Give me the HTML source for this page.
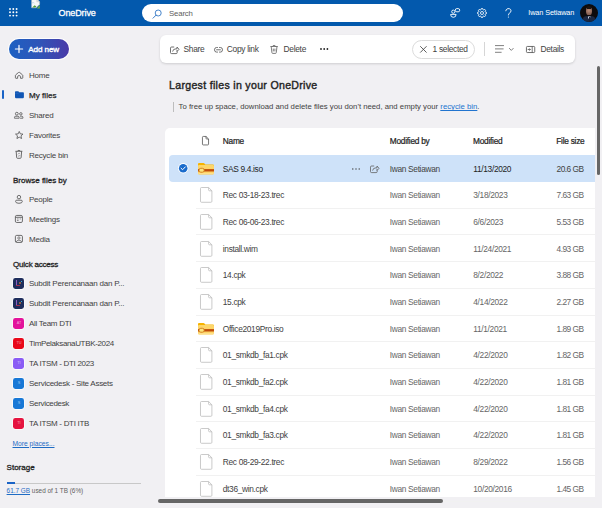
<!DOCTYPE html>
<html><head><meta charset="utf-8">
<style>
*{margin:0;padding:0;box-sizing:border-box}
html,body{width:602px;height:508px;overflow:hidden}
body{font-family:"Liberation Sans",sans-serif;background:#f1f0f3;position:relative;color:#242424}
.a{position:absolute}
.ic{position:absolute;overflow:visible}
.t{position:absolute;white-space:nowrap;line-height:10px;height:10px}
.nav{font-size:8px;color:#424242}
.sec{font-size:8px;color:#242424;-webkit-text-stroke:0.3px #242424}
.cmd{font-size:8.4px;color:#424242;letter-spacing:-0.3px}
.hc{font-size:8.3px;letter-spacing:-0.25px;color:#242424;-webkit-text-stroke:0.22px #242424}
.c{font-size:8.35px;color:#666;letter-spacing:-0.33px}
.cn{font-size:8.35px;color:#424242;letter-spacing:-0.33px}
</style></head><body>

<div class="a" style="left:0;top:0;width:602px;height:25.5px;background:#0359ad"></div>
<svg class="ic" style="left:9px;top:8.2px;width:9px;height:9px" viewBox="0 0 9 9"><circle cx="1.00" cy="1.00" r="0.95" fill="#fff"/><circle cx="1.00" cy="4.30" r="0.95" fill="#fff"/><circle cx="1.00" cy="7.60" r="0.95" fill="#fff"/><circle cx="4.30" cy="1.00" r="0.95" fill="#fff"/><circle cx="4.30" cy="4.30" r="0.95" fill="#fff"/><circle cx="4.30" cy="7.60" r="0.95" fill="#fff"/><circle cx="7.60" cy="1.00" r="0.95" fill="#fff"/><circle cx="7.60" cy="4.30" r="0.95" fill="#fff"/><circle cx="7.60" cy="7.60" r="0.95" fill="#fff"/></svg>
<svg class="ic" style="left:31px;top:0px;width:9.5px;height:8.5px" viewBox="0 0 9.5 8.5"><path d="M0.6 -1 H5.8 L8.6 1.8 V4.2 L5.2 7.8 H0.6 Z" fill="#f7f7f7" stroke="#bdbdbd" stroke-width="0.5"/><path d="M5.8 -1 V1.8 H8.6" fill="#e0e0e0" stroke="#bdbdbd" stroke-width="0.4"/><path d="M1.2 7.6 L3.6 5.2 L5.4 6.6 L4.4 7.6 Z" fill="#4f9a3a"/><path d="M5.6 8.4 L8.8 5 V8.4 Z" fill="#6aab45"/><path d="M1 3 Q2.4 2 3.4 3.2" fill="none" stroke="#8fb7e0" stroke-width="0.5"/></svg>
<div class="t " style="left:58.5px;top:7.5px;font-size:9px;color:#fff;-webkit-text-stroke:0.3px #fff;letter-spacing:-0.1px">OneDrive</div>
<div class="a" style="left:142.3px;top:3.7px;width:260.5px;height:18px;background:#fff;border-radius:9px"></div>
<svg class="ic" style="left:152px;top:8.5px;width:10px;height:10px" viewBox="0 0 10 10"><circle cx="6.2" cy="4" r="3" fill="none" stroke="#3f7fc8" stroke-width="0.95"/><path d="M4.1 6.1 L1 9.2" stroke="#3f7fc8" stroke-width="1" stroke-linecap="round"/></svg>
<div class="t " style="left:169px;top:8.7px;font-size:7.8px;letter-spacing:-0.15px;color:#605e5c">Search</div>
<svg class="ic" style="left:450px;top:8px;width:10px;height:10px" viewBox="0 0 10 10"><circle cx="3.3" cy="3.7" r="1.6" fill="none" stroke="#fff" stroke-width="0.9"/><path d="M0.6 6.4 H6.1 Q6.1 9.3 3.35 9.3 Q0.6 9.3 0.6 6.4 Z" fill="none" stroke="#fff" stroke-width="0.9" stroke-linejoin="round"/><rect x="5.3" y="0.6" width="4.4" height="3.2" rx="1.5" fill="none" stroke="#fff" stroke-width="0.9"/></svg>
<svg class="ic" style="left:477px;top:8px;width:10px;height:10px" viewBox="0 0 10 10"><circle cx="5" cy="5" r="1.5" fill="none" stroke="#fff" stroke-width="0.85"/><path d="M8.44 4.14 L9.51 4.37 L9.51 5.63 L8.44 5.86 L8.04 6.83 L8.63 7.74 L7.74 8.63 L6.83 8.04 L5.86 8.44 L5.63 9.51 L4.37 9.51 L4.14 8.44 L3.17 8.04 L2.26 8.63 L1.37 7.74 L1.96 6.83 L1.56 5.86 L0.49 5.63 L0.49 4.37 L1.56 4.14 L1.96 3.17 L1.37 2.26 L2.26 1.37 L3.17 1.96 L4.14 1.56 L4.37 0.49 L5.63 0.49 L5.86 1.56 L6.83 1.96 L7.74 1.37 L8.63 2.26 L8.04 3.17 Z" fill="none" stroke="#fff" stroke-width="0.85" stroke-linejoin="round"/></svg>
<svg class="ic" style="left:505px;top:8px;width:7px;height:10px" viewBox="0 0 7 10"><path d="M0.8 2.8 C0.8 -0.2 6 -0.2 6 2.8 C6 4.8 3.4 5 3.4 7" fill="none" stroke="#fff" stroke-width="0.9" stroke-linecap="round"/><circle cx="3.4" cy="9" r="0.6" fill="#fff"/></svg>
<div class="t " style="left:528.3px;top:8.2px;font-size:7.3px;letter-spacing:-0.12px;color:#fff">Iwan Setiawan</div>
<div class="a" style="left:580px;top:3.8px;width:18px;height:18px;border-radius:50%;background:#0d0b0c;overflow:hidden"><div class="a" style="left:6.3px;top:3.5px;width:5.6px;height:8px;border-radius:45%;background:radial-gradient(circle at 50% 45%,#b98c78,#6e4d42)"></div><div class="a" style="left:7px;top:2.6px;width:4.4px;height:2.5px;border-radius:50% 50% 0 0;background:#1a1412"></div><div class="a" style="left:3px;top:12.5px;width:12px;height:7px;border-radius:40% 40% 0 0;background:#1b2842"></div><div class="a" style="left:7.6px;top:12.6px;width:3px;height:3px;background:#d8dde6;clip-path:polygon(0 0,100% 0,50% 100%)"></div><div class="a" style="left:8.6px;top:13.6px;width:1px;height:5px;background:#1a2238"></div></div>
<div class="a" style="left:0;top:25.5px;width:155px;height:482.5px;background:#f1f0f3"></div>
<div class="a" style="left:9px;top:39px;width:60px;height:20px;border-radius:10px;background:linear-gradient(90deg,#1c60c2,#2f55b8 50%,#4a3aa8);box-shadow:0 0 0 1px rgba(255,255,255,.85)"></div>
<svg class="ic" style="left:14.8px;top:45.3px;width:8px;height:8px" viewBox="0 0 8 8"><path d="M4 0.4 V7.6 M0.4 4 H7.6" stroke="#fff" stroke-width="1.2" stroke-linecap="round"/></svg>
<div class="t " style="left:28.3px;top:44.9px;font-size:8.1px;letter-spacing:-0.1px;color:#fff;-webkit-text-stroke:0.35px #fff">Add new</div>
<div class="t nav" style="left:29px;top:70.8px;letter-spacing:-0.22px">Home</div>
<svg class="ic" style="left:14.8px;top:72px;width:8.2px;height:6.7px" viewBox="0 0 17 14"><path d="M7.2 1.1 Q8.5 0 9.8 1.1 L15.6 6 Q16.2 6.5 16.2 7.3 V12 Q16.2 13.2 15 13.2 H11.6 V9.6 Q11.6 7.6 8.5 7.6 Q5.4 7.6 5.4 9.6 V13.2 H2 Q0.8 13.2 0.8 12 V7.3 Q0.8 6.5 1.4 6 Z" fill="none" stroke="#555" stroke-width="1.75" stroke-linejoin="round"/></svg>
<div class="t nav" style="left:29px;top:90.8px;color:#242424;-webkit-text-stroke:0.25px #242424;letter-spacing:0.05px">My files</div>
<svg class="ic" style="left:14.5px;top:91px;width:8.9px;height:7.4px" viewBox="0 0 18 14"><path d="M0 1.6 Q0 0 1.6 0 H6 Q6.8 0 7.3 0.5 L8.6 1.8 H16.4 Q18 1.8 18 3.4 V12.4 Q18 14 16.4 14 H1.6 Q0 14 0 12.4 Z" fill="#1156b4"/><path d="M0 4 H7 L8.6 2.6" fill="none" stroke="#4d86cf" stroke-width="0.7"/></svg>
<div class="t nav" style="left:29px;top:110.8px;letter-spacing:-0.22px">Shared</div>
<svg class="ic" style="left:14.4px;top:111.5px;width:9.4px;height:6.6px" viewBox="0 0 20 14"><circle cx="6" cy="3.6" r="3" fill="none" stroke="#555" stroke-width="1.75"/><path d="M1 13.2 V11.6 Q1 9 3.6 9 H8.4 Q11 9 11 11.6 V13.2 Z" fill="none" stroke="#555" stroke-width="1.75" stroke-linejoin="round"/><circle cx="14.6" cy="3.9" r="2.6" fill="none" stroke="#555" stroke-width="1.75"/><path d="M13 9 H16.4 Q19 9 19 11.6 V13.2 H13" fill="none" stroke="#555" stroke-width="1.75" stroke-linejoin="round"/></svg>
<div class="t nav" style="left:29px;top:130.8px;letter-spacing:-0.22px">Favorites</div>
<svg class="ic" style="left:14.7px;top:130.8px;width:8.5px;height:8.1px" viewBox="0 0 18 17"><path d="M9 0.9 L11.3 6 L16.9 6.5 L12.7 10.2 L13.9 15.9 L9 13 L4.1 15.9 L5.3 10.2 L1.1 6.5 L6.7 6 Z" fill="none" stroke="#555" stroke-width="1.75" stroke-linejoin="round"/></svg>
<div class="t nav" style="left:29px;top:150.8px;letter-spacing:-0.22px">Recycle bin</div>
<svg class="ic" style="left:15px;top:150.4px;width:7.8px;height:8.8px" viewBox="0 0 16 18"><path d="M1 2.6 H15 M2.4 2.6 L3.4 15.4 Q3.6 17 5.2 17 H10.8 Q12.4 17 12.6 15.4 L13.6 2.6 M5.4 2.6 Q5.4 0.8 8 0.8 Q10.6 0.8 10.6 2.6" fill="none" stroke="#555" stroke-width="1.75" stroke-linejoin="round"/><path d="M5.8 9 Q6.8 6.6 9.2 7 L10.2 7.8 M10.4 10.6 Q9.6 12.8 7 12.4 L6 11.6" fill="none" stroke="#555" stroke-width="1"/></svg>
<div class="a" style="left:2px;top:90.4px;width:1.8px;height:8.8px;border-radius:1px;background:#1a63c6"></div>
<div class="t sec" style="left:13px;top:176.1px;">Browse files by</div>
<div class="t nav" style="left:29px;top:194.8px;letter-spacing:-0.22px">People</div>
<svg class="ic" style="left:15.1px;top:194.9px;width:7.9px;height:8.7px" viewBox="0 0 16 18"><circle cx="8" cy="4.4" r="3.6" fill="none" stroke="#555" stroke-width="1.75"/><path d="M1 13.2 Q1 10.8 3.4 10.8 H12.6 Q15 10.8 15 13.2 Q15 17.2 8 17.2 Q1 17.2 1 13.2 Z" fill="none" stroke="#555" stroke-width="1.75"/></svg>
<div class="t nav" style="left:29px;top:214.8px;letter-spacing:-0.22px">Meetings</div>
<svg class="ic" style="left:15.1px;top:215.3px;width:7.8px;height:7.9px" viewBox="0 0 16 16"><rect x="0.8" y="0.8" width="14.4" height="14.4" rx="2.6" fill="none" stroke="#555" stroke-width="1.75"/><path d="M0.8 4.6 H15.2" stroke="#555" stroke-width="1.75"/><path d="M4 8 H7.4 M4 11.2 H7.4 M9.6 8 H12" stroke="#555" stroke-width="1.3"/></svg>
<div class="t nav" style="left:29px;top:234.8px;letter-spacing:-0.22px">Media</div>
<svg class="ic" style="left:15.1px;top:235.3px;width:7.8px;height:7.8px" viewBox="0 0 16 16"><rect x="0.8" y="0.8" width="14.4" height="14.4" rx="2.6" fill="none" stroke="#555" stroke-width="1.75"/><circle cx="8" cy="6.2" r="2.4" fill="none" stroke="#555" stroke-width="1.4"/><path d="M2.2 14.6 Q3.6 10.6 8 10.6 Q12.4 10.6 13.8 14.6" fill="none" stroke="#555" stroke-width="1.4"/></svg>
<div class="t sec" style="left:13px;top:260.2px;letter-spacing:-0.2px">Quick access</div>
<div class="t nav" style="left:29px;top:279.4px;letter-spacing:-0.22px">Subdit Perencanaan dan P...</div>
<div class="a" style="left:13.4px;top:277.9px;width:11.1px;height:11.1px;border-radius:2.4px;background:#1f2d5c;box-shadow:0 0 0 0.7px rgba(255,255,255,.9)"><div class="a" style="left:2.2px;top:2.2px;width:0.9px;height:5.5px;background:#8a5fc0"></div><div class="a" style="left:5.2px;top:4.2px;width:2.2px;height:2.2px;border-radius:50%;background:#b07040"></div><div class="a" style="left:7.6px;top:3px;width:0.9px;height:0.9px;background:#3ab0d8"></div><div class="a" style="left:2.2px;top:7.6px;width:4px;height:0.8px;background:#a03050"></div></div>
<div class="t nav" style="left:29px;top:299.4px;letter-spacing:-0.22px">Subdit Perencanaan dan P...</div>
<div class="a" style="left:13.4px;top:297.9px;width:11.1px;height:11.1px;border-radius:2.4px;background:#1f2d5c;box-shadow:0 0 0 0.7px rgba(255,255,255,.9)"><div class="a" style="left:2.2px;top:2.2px;width:0.9px;height:5.5px;background:#8a5fc0"></div><div class="a" style="left:5.2px;top:4.2px;width:2.2px;height:2.2px;border-radius:50%;background:#b07040"></div><div class="a" style="left:7.6px;top:3px;width:0.9px;height:0.9px;background:#3ab0d8"></div><div class="a" style="left:2.2px;top:7.6px;width:4px;height:0.8px;background:#a03050"></div></div>
<div class="t nav" style="left:29px;top:319.4px;letter-spacing:-0.29px">All Team DTI</div>
<div class="a" style="left:13.4px;top:317.9px;width:11.1px;height:11.1px;border-radius:2.4px;background:#e3139b;box-shadow:0 0 0 0.7px rgba(255,255,255,.9)"><div class="a" style="left:0;top:3px;width:11.1px;text-align:center;font-size:3.8px;line-height:5px;color:rgba(255,255,255,.6)">AT</div></div>
<div class="t nav" style="left:29px;top:339.4px;letter-spacing:-0.35px">TimPelaksanaUTBK-2024</div>
<div class="a" style="left:13.4px;top:337.9px;width:11.1px;height:11.1px;border-radius:2.4px;background:#e9081a;box-shadow:0 0 0 0.7px rgba(255,255,255,.9)"><div class="a" style="left:0;top:3px;width:11.1px;text-align:center;font-size:3.8px;line-height:5px;color:rgba(255,255,255,.6)">TU</div></div>
<div class="t nav" style="left:29px;top:359.4px;letter-spacing:-0.31px">TA ITSM - DTI 2023</div>
<div class="a" style="left:13.4px;top:357.9px;width:11.1px;height:11.1px;border-radius:2.4px;background:#8a5cf5;box-shadow:0 0 0 0.7px rgba(255,255,255,.9)"><div class="a" style="left:0;top:3px;width:11.1px;text-align:center;font-size:3.8px;line-height:5px;color:rgba(255,255,255,.6)">TI</div></div>
<div class="t nav" style="left:29px;top:379.4px;letter-spacing:-0.26px">Servicedesk - Site Assets</div>
<div class="a" style="left:13.4px;top:377.9px;width:11.1px;height:11.1px;border-radius:2.4px;background:#1878d6;box-shadow:0 0 0 0.7px rgba(255,255,255,.9)"><div class="a" style="left:0;top:3px;width:11.1px;text-align:center;font-size:3.8px;line-height:5px;color:rgba(255,255,255,.6)">S</div></div>
<div class="t nav" style="left:29px;top:399.4px;letter-spacing:-0.32px">Servicedesk</div>
<div class="a" style="left:13.4px;top:397.9px;width:11.1px;height:11.1px;border-radius:2.4px;background:#1878d6;box-shadow:0 0 0 0.7px rgba(255,255,255,.9)"><div class="a" style="left:0;top:3px;width:11.1px;text-align:center;font-size:3.8px;line-height:5px;color:rgba(255,255,255,.6)">S</div></div>
<div class="t nav" style="left:29px;top:419.4px;letter-spacing:-0.3px">TA ITSM - DTI ITB</div>
<div class="a" style="left:13.4px;top:417.9px;width:11.1px;height:11.1px;border-radius:2.4px;background:#e5133f;box-shadow:0 0 0 0.7px rgba(255,255,255,.9)"><div class="a" style="left:0;top:3px;width:11.1px;text-align:center;font-size:3.8px;line-height:5px;color:rgba(255,255,255,.6)">TI</div></div>
<div class="t " style="left:12.5px;top:438.5px;font-size:6.7px;color:#1f6cc4;text-decoration:underline">More places...</div>
<div class="t " style="left:6.6px;top:463px;font-size:8px;color:#242424;-webkit-text-stroke:0.3px #242424">Storage</div>
<div class="a" style="left:6.6px;top:482.6px;width:134.4px;height:1.1px;background:#c8c8c8"></div>
<div class="a" style="left:6.6px;top:482.2px;width:8px;height:1.8px;background:#1a63c6"></div>
<div class="t " style="left:6.6px;top:486px;font-size:6.4px;color:#616161"><span style="color:#1f6cc4;text-decoration:underline">61.7 GB</span> used of 1 TB (6%)</div>
<div class="a" style="left:160px;top:35.2px;width:415.3px;height:27.8px;background:#fff;border-radius:6px;box-shadow:0 1px 2.5px rgba(0,0,0,.15)"></div>
<svg class="ic" style="left:170px;top:45.6px;width:9px;height:8px" viewBox="0 0 9 8"><path d="M4.2 1 H1.6 Q0.5 1 0.5 2.1 V6.6 Q0.5 7.6 1.6 7.6 H6.2 Q7.2 7.6 7.2 6.6 V5.6" fill="none" stroke="#616161" stroke-width="0.9"/><path d="M2.6 5.6 Q3 2.8 6 2.8 H7 V1 L9 3.3 L7 5.6 V3.9" fill="none" stroke="#616161" stroke-width="0.9" stroke-linejoin="round"/></svg>
<div class="t cmd" style="left:183.5px;top:43.7px;">Share</div>
<svg class="ic" style="left:213.8px;top:46.5px;width:9px;height:5.6px" viewBox="0 0 9 5.6"><path d="M3.5 0.5 H2.6 Q0.5 0.5 0.5 2.8 Q0.5 5.1 2.6 5.1 H3.5 M5.5 0.5 H6.4 Q8.5 0.5 8.5 2.8 Q8.5 5.1 6.4 5.1 H5.5 M2.6 2.8 H6.4" fill="none" stroke="#616161" stroke-width="0.9" stroke-linecap="round"/></svg>
<div class="t cmd" style="left:226.8px;top:43.7px;">Copy link</div>
<svg class="ic" style="left:270.3px;top:45px;width:8.2px;height:8.8px" viewBox="0 0 8.2 8.8"><path d="M0.4 1.5 H7.8 M1.2 1.5 L1.9 7.6 Q2 8.4 2.8 8.4 H5.4 Q6.2 8.4 6.3 7.6 L7 1.5 M2.7 1.5 Q2.7 0.4 4.1 0.4 Q5.5 0.4 5.5 1.5 M3.3 3.6 V6.4 M4.9 3.6 V6.4" fill="none" stroke="#555" stroke-width="0.75" stroke-linejoin="round"/></svg>
<div class="t cmd" style="left:283.6px;top:43.7px;">Delete</div>
<svg class="ic" style="left:319.5px;top:48.2px;width:9px;height:2px" viewBox="0 0 9 2"><circle cx="1" cy="1" r="0.9" fill="#242424"/><circle cx="4.2" cy="1" r="0.9" fill="#242424"/><circle cx="7.4" cy="1" r="0.9" fill="#242424"/></svg>
<div class="a" style="left:412px;top:40px;width:63px;height:18.5px;border:0.8px solid #dcdcdc;border-radius:9.5px;background:#fff"></div>
<svg class="ic" style="left:420.4px;top:45.6px;width:6.8px;height:6.8px" viewBox="0 0 6.8 6.8"><path d="M0.5 0.5 L6.3 6.3 M6.3 0.5 L0.5 6.3" stroke="#424242" stroke-width="0.85" stroke-linecap="round"/></svg>
<div class="t cmd" style="left:432.5px;top:43.7px;">1 selected</div>
<div class="a" style="left:484px;top:42px;width:0.8px;height:14px;background:#d6d6d6"></div>
<svg class="ic" style="left:495px;top:45px;width:10px;height:8px" viewBox="0 0 10 8"><path d="M0.4 0.6 H8.6 M0.4 3.9 H8.2 M0.4 7.3 H6.2" stroke="#555" stroke-width="0.75" stroke-linecap="round"/></svg>
<svg class="ic" style="left:508.5px;top:47.5px;width:5px;height:3px" viewBox="0 0 5 3"><path d="M0.4 0.4 L2.3 2.4 L4.2 0.4" fill="none" stroke="#616161" stroke-width="0.8" stroke-linecap="round"/></svg>
<svg class="ic" style="left:525.8px;top:46.2px;width:9.2px;height:7px" viewBox="0 0 9.2 7"><rect x="0.45" y="0.45" width="8.3" height="6.1" rx="0.9" fill="none" stroke="#555" stroke-width="0.85"/><path d="M6.2 0.45 V6.55 M1.7 3.5 H4.4 M3.3 2.4 L4.4 3.5 L3.3 4.6" fill="none" stroke="#555" stroke-width="0.8"/></svg>
<div class="t cmd" style="left:540.5px;top:43.7px;">Details</div>
<div class="t " style="left:169px;top:79.8px;font-size:10.6px;letter-spacing:0.3px;color:#242424;-webkit-text-stroke:0.4px #242424">Largest files in your OneDrive</div>
<div class="a" style="left:173px;top:102px;width:0.9px;height:10.4px;background:#bdbdbd"></div>
<div class="t " style="left:178.6px;top:102.3px;font-size:7.75px;color:#424242">To free up space, download and delete files you don't need, and empty your <span style="color:#2174cf;text-decoration:underline">recycle bin</span>.</div>
<div class="a" style="left:165px;top:127.8px;width:429.8px;height:369.4px;background:#fff;border-radius:5px 0 0 0"></div>
<svg class="ic" style="left:201.9px;top:136.2px;width:7px;height:9.4px" viewBox="0 0 7 9.4"><path d="M0.45 1.3 Q0.45 0.45 1.3 0.45 H4 L6.55 3 V8.1 Q6.55 8.95 5.7 8.95 H1.3 Q0.45 8.95 0.45 8.1 Z M4 0.45 V2.2 Q4 3 4.8 3 H6.55" fill="none" stroke="#555" stroke-width="0.8" stroke-linejoin="round"/></svg>
<div class="t hc" style="left:222.8px;top:135.9px;">Name</div>
<div class="t hc" style="left:389.8px;top:135.9px;">Modified by</div>
<div class="t hc" style="left:473px;top:135.9px;">Modified</div>
<div class="t hc" style="left:556.3px;top:135.9px;">File size</div>
<div class="a" style="left:169.3px;top:154.9px;width:425.5px;height:26.990000000000002px;background:#cee2f9;border-radius:4px 0 0 4px"></div>
<svg class="ic" style="left:198.3px;top:162.945px;width:16px;height:11.3px" viewBox="0 0 16 11.3"><path d="M0 1 Q0 0 1 0 H5.4 Q6.2 0 6.7 0.7 L7.3 1.6 H15 Q16 1.6 16 2.6 V10.3 Q16 11.3 15 11.3 H1 Q0 11.3 0 10.3 Z" fill="#f6b300"/><path d="M0 2.9 Q0 1.9 1 1.9 H15 Q16 1.9 16 2.9 V10.3 Q16 11.3 15 11.3 H1 Q0 11.3 0 10.3 Z" fill="#fdd66a"/><rect x="5" y="6.1" width="11" height="2.4" fill="#c14c08"/><rect x="0" y="6.1" width="1.5" height="2.4" fill="#c14c08"/><rect x="1" y="5.3" width="5.2" height="3.9" rx="1.8" fill="#fde67c" stroke="#d0761a" stroke-width="0.9"/><rect x="0" y="9.9" width="16" height="1.4" rx="0.7" fill="#fee08a"/></svg>
<div class="t cn" style="left:222.8px;top:163.595px;color:#242424">SAS 9.4.iso</div>
<div class="t c" style="left:389.8px;top:163.595px;color:#424242">Iwan Setiawan</div>
<div class="t c" style="left:473.3px;top:163.595px;color:#242424">11/13/2020</div>
<div class="t c" style="left:556.5px;top:163.595px;color:#424242;letter-spacing:-0.5px">20.6 GB</div>
<div class="a" style="left:196px;top:207.78px;width:398.8px;height:0.8px;background:#f1f1f1"></div>
<svg class="ic" style="left:200.1px;top:187.335px;width:12.4px;height:15.8px" viewBox="0 0 12.4 15.8"><path d="M0.5 1.5 Q0.5 0.5 1.5 0.5 H8.6 L11.9 3.8 V14.3 Q11.9 15.3 10.9 15.3 H1.5 Q0.5 15.3 0.5 14.3 Z M8.6 0.5 V2.8 Q8.6 3.8 9.6 3.8 H11.9" fill="#fff" stroke="#bdbdbd" stroke-width="0.8" stroke-linejoin="round"/></svg>
<div class="t cn" style="left:222.8px;top:190.285px;">Rec 03-18-23.trec</div>
<div class="t c" style="left:389.8px;top:190.285px;">Iwan Setiawan</div>
<div class="t c" style="left:473.3px;top:190.285px;">3/18/2023</div>
<div class="t c" style="left:556.5px;top:190.285px;letter-spacing:-0.5px">7.63 GB</div>
<div class="a" style="left:196px;top:234.47px;width:398.8px;height:0.8px;background:#f1f1f1"></div>
<svg class="ic" style="left:200.1px;top:214.025px;width:12.4px;height:15.8px" viewBox="0 0 12.4 15.8"><path d="M0.5 1.5 Q0.5 0.5 1.5 0.5 H8.6 L11.9 3.8 V14.3 Q11.9 15.3 10.9 15.3 H1.5 Q0.5 15.3 0.5 14.3 Z M8.6 0.5 V2.8 Q8.6 3.8 9.6 3.8 H11.9" fill="#fff" stroke="#bdbdbd" stroke-width="0.8" stroke-linejoin="round"/></svg>
<div class="t cn" style="left:222.8px;top:216.975px;">Rec 06-06-23.trec</div>
<div class="t c" style="left:389.8px;top:216.975px;">Iwan Setiawan</div>
<div class="t c" style="left:473.3px;top:216.975px;">6/6/2023</div>
<div class="t c" style="left:556.5px;top:216.975px;letter-spacing:-0.5px">5.53 GB</div>
<div class="a" style="left:196px;top:261.16px;width:398.8px;height:0.8px;background:#f1f1f1"></div>
<svg class="ic" style="left:200.1px;top:240.71500000000003px;width:12.4px;height:15.8px" viewBox="0 0 12.4 15.8"><path d="M0.5 1.5 Q0.5 0.5 1.5 0.5 H8.6 L11.9 3.8 V14.3 Q11.9 15.3 10.9 15.3 H1.5 Q0.5 15.3 0.5 14.3 Z M8.6 0.5 V2.8 Q8.6 3.8 9.6 3.8 H11.9" fill="#fff" stroke="#bdbdbd" stroke-width="0.8" stroke-linejoin="round"/></svg>
<div class="t cn" style="left:222.8px;top:243.66500000000002px;">install.wim</div>
<div class="t c" style="left:389.8px;top:243.66500000000002px;">Iwan Setiawan</div>
<div class="t c" style="left:473.3px;top:243.66500000000002px;">11/24/2021</div>
<div class="t c" style="left:556.5px;top:243.66500000000002px;letter-spacing:-0.5px">4.93 GB</div>
<div class="a" style="left:196px;top:287.85px;width:398.8px;height:0.8px;background:#f1f1f1"></div>
<svg class="ic" style="left:200.1px;top:267.40500000000003px;width:12.4px;height:15.8px" viewBox="0 0 12.4 15.8"><path d="M0.5 1.5 Q0.5 0.5 1.5 0.5 H8.6 L11.9 3.8 V14.3 Q11.9 15.3 10.9 15.3 H1.5 Q0.5 15.3 0.5 14.3 Z M8.6 0.5 V2.8 Q8.6 3.8 9.6 3.8 H11.9" fill="#fff" stroke="#bdbdbd" stroke-width="0.8" stroke-linejoin="round"/></svg>
<div class="t cn" style="left:222.8px;top:270.3550000000001px;">14.cpk</div>
<div class="t c" style="left:389.8px;top:270.3550000000001px;">Iwan Setiawan</div>
<div class="t c" style="left:473.3px;top:270.3550000000001px;">8/2/2022</div>
<div class="t c" style="left:556.5px;top:270.3550000000001px;letter-spacing:-0.5px">3.88 GB</div>
<div class="a" style="left:196px;top:314.54px;width:398.8px;height:0.8px;background:#f1f1f1"></div>
<svg class="ic" style="left:200.1px;top:294.095px;width:12.4px;height:15.8px" viewBox="0 0 12.4 15.8"><path d="M0.5 1.5 Q0.5 0.5 1.5 0.5 H8.6 L11.9 3.8 V14.3 Q11.9 15.3 10.9 15.3 H1.5 Q0.5 15.3 0.5 14.3 Z M8.6 0.5 V2.8 Q8.6 3.8 9.6 3.8 H11.9" fill="#fff" stroke="#bdbdbd" stroke-width="0.8" stroke-linejoin="round"/></svg>
<div class="t cn" style="left:222.8px;top:297.0450000000001px;">15.cpk</div>
<div class="t c" style="left:389.8px;top:297.0450000000001px;">Iwan Setiawan</div>
<div class="t c" style="left:473.3px;top:297.0450000000001px;">4/14/2022</div>
<div class="t c" style="left:556.5px;top:297.0450000000001px;letter-spacing:-0.5px">2.27 GB</div>
<div class="a" style="left:196px;top:341.23px;width:398.8px;height:0.8px;background:#f1f1f1"></div>
<svg class="ic" style="left:198.3px;top:323.08500000000004px;width:16px;height:11.3px" viewBox="0 0 16 11.3"><path d="M0 1 Q0 0 1 0 H5.4 Q6.2 0 6.7 0.7 L7.3 1.6 H15 Q16 1.6 16 2.6 V10.3 Q16 11.3 15 11.3 H1 Q0 11.3 0 10.3 Z" fill="#f6b300"/><path d="M0 2.9 Q0 1.9 1 1.9 H15 Q16 1.9 16 2.9 V10.3 Q16 11.3 15 11.3 H1 Q0 11.3 0 10.3 Z" fill="#fdd66a"/><rect x="5" y="6.1" width="11" height="2.4" fill="#c14c08"/><rect x="0" y="6.1" width="1.5" height="2.4" fill="#c14c08"/><rect x="1" y="5.3" width="5.2" height="3.9" rx="1.8" fill="#fde67c" stroke="#d0761a" stroke-width="0.9"/><rect x="0" y="9.9" width="16" height="1.4" rx="0.7" fill="#fee08a"/></svg>
<div class="t cn" style="left:222.8px;top:323.73500000000007px;">Office2019Pro.iso</div>
<div class="t c" style="left:389.8px;top:323.73500000000007px;">Iwan Setiawan</div>
<div class="t c" style="left:473.3px;top:323.73500000000007px;">11/1/2021</div>
<div class="t c" style="left:556.5px;top:323.73500000000007px;letter-spacing:-0.5px">1.89 GB</div>
<div class="a" style="left:196px;top:367.92px;width:398.8px;height:0.8px;background:#f1f1f1"></div>
<svg class="ic" style="left:200.1px;top:347.475px;width:12.4px;height:15.8px" viewBox="0 0 12.4 15.8"><path d="M0.5 1.5 Q0.5 0.5 1.5 0.5 H8.6 L11.9 3.8 V14.3 Q11.9 15.3 10.9 15.3 H1.5 Q0.5 15.3 0.5 14.3 Z M8.6 0.5 V2.8 Q8.6 3.8 9.6 3.8 H11.9" fill="#fff" stroke="#bdbdbd" stroke-width="0.8" stroke-linejoin="round"/></svg>
<div class="t cn" style="left:222.8px;top:350.42500000000007px;">01_smkdb_fa1.cpk</div>
<div class="t c" style="left:389.8px;top:350.42500000000007px;">Iwan Setiawan</div>
<div class="t c" style="left:473.3px;top:350.42500000000007px;">4/22/2020</div>
<div class="t c" style="left:556.5px;top:350.42500000000007px;letter-spacing:-0.5px">1.82 GB</div>
<div class="a" style="left:196px;top:394.61px;width:398.8px;height:0.8px;background:#f1f1f1"></div>
<svg class="ic" style="left:200.1px;top:374.165px;width:12.4px;height:15.8px" viewBox="0 0 12.4 15.8"><path d="M0.5 1.5 Q0.5 0.5 1.5 0.5 H8.6 L11.9 3.8 V14.3 Q11.9 15.3 10.9 15.3 H1.5 Q0.5 15.3 0.5 14.3 Z M8.6 0.5 V2.8 Q8.6 3.8 9.6 3.8 H11.9" fill="#fff" stroke="#bdbdbd" stroke-width="0.8" stroke-linejoin="round"/></svg>
<div class="t cn" style="left:222.8px;top:377.11500000000007px;">01_smkdb_fa2.cpk</div>
<div class="t c" style="left:389.8px;top:377.11500000000007px;">Iwan Setiawan</div>
<div class="t c" style="left:473.3px;top:377.11500000000007px;">4/22/2020</div>
<div class="t c" style="left:556.5px;top:377.11500000000007px;letter-spacing:-0.5px">1.81 GB</div>
<div class="a" style="left:196px;top:421.30px;width:398.8px;height:0.8px;background:#f1f1f1"></div>
<svg class="ic" style="left:200.1px;top:400.855px;width:12.4px;height:15.8px" viewBox="0 0 12.4 15.8"><path d="M0.5 1.5 Q0.5 0.5 1.5 0.5 H8.6 L11.9 3.8 V14.3 Q11.9 15.3 10.9 15.3 H1.5 Q0.5 15.3 0.5 14.3 Z M8.6 0.5 V2.8 Q8.6 3.8 9.6 3.8 H11.9" fill="#fff" stroke="#bdbdbd" stroke-width="0.8" stroke-linejoin="round"/></svg>
<div class="t cn" style="left:222.8px;top:403.80500000000006px;">01_smkdb_fa4.cpk</div>
<div class="t c" style="left:389.8px;top:403.80500000000006px;">Iwan Setiawan</div>
<div class="t c" style="left:473.3px;top:403.80500000000006px;">4/22/2020</div>
<div class="t c" style="left:556.5px;top:403.80500000000006px;letter-spacing:-0.5px">1.81 GB</div>
<div class="a" style="left:196px;top:447.99px;width:398.8px;height:0.8px;background:#f1f1f1"></div>
<svg class="ic" style="left:200.1px;top:427.5450000000001px;width:12.4px;height:15.8px" viewBox="0 0 12.4 15.8"><path d="M0.5 1.5 Q0.5 0.5 1.5 0.5 H8.6 L11.9 3.8 V14.3 Q11.9 15.3 10.9 15.3 H1.5 Q0.5 15.3 0.5 14.3 Z M8.6 0.5 V2.8 Q8.6 3.8 9.6 3.8 H11.9" fill="#fff" stroke="#bdbdbd" stroke-width="0.8" stroke-linejoin="round"/></svg>
<div class="t cn" style="left:222.8px;top:430.4950000000001px;">01_smkdb_fa3.cpk</div>
<div class="t c" style="left:389.8px;top:430.4950000000001px;">Iwan Setiawan</div>
<div class="t c" style="left:473.3px;top:430.4950000000001px;">4/22/2020</div>
<div class="t c" style="left:556.5px;top:430.4950000000001px;letter-spacing:-0.5px">1.81 GB</div>
<div class="a" style="left:196px;top:474.68px;width:398.8px;height:0.8px;background:#f1f1f1"></div>
<svg class="ic" style="left:200.1px;top:454.235px;width:12.4px;height:15.8px" viewBox="0 0 12.4 15.8"><path d="M0.5 1.5 Q0.5 0.5 1.5 0.5 H8.6 L11.9 3.8 V14.3 Q11.9 15.3 10.9 15.3 H1.5 Q0.5 15.3 0.5 14.3 Z M8.6 0.5 V2.8 Q8.6 3.8 9.6 3.8 H11.9" fill="#fff" stroke="#bdbdbd" stroke-width="0.8" stroke-linejoin="round"/></svg>
<div class="t cn" style="left:222.8px;top:457.18500000000006px;">Rec 08-29-22.trec</div>
<div class="t c" style="left:389.8px;top:457.18500000000006px;">Iwan Setiawan</div>
<div class="t c" style="left:473.3px;top:457.18500000000006px;">8/29/2022</div>
<div class="t c" style="left:556.5px;top:457.18500000000006px;letter-spacing:-0.5px">1.56 GB</div>
<div class="a" style="left:196px;top:501.37px;width:398.8px;height:0.8px;background:#f1f1f1"></div>
<svg class="ic" style="left:200.1px;top:480.92500000000007px;width:12.4px;height:15.8px" viewBox="0 0 12.4 15.8"><path d="M0.5 1.5 Q0.5 0.5 1.5 0.5 H8.6 L11.9 3.8 V14.3 Q11.9 15.3 10.9 15.3 H1.5 Q0.5 15.3 0.5 14.3 Z M8.6 0.5 V2.8 Q8.6 3.8 9.6 3.8 H11.9" fill="#fff" stroke="#bdbdbd" stroke-width="0.8" stroke-linejoin="round"/></svg>
<div class="t cn" style="left:222.8px;top:483.8750000000001px;">dt36_win.cpk</div>
<div class="t c" style="left:389.8px;top:483.8750000000001px;">Iwan Setiawan</div>
<div class="t c" style="left:473.3px;top:483.8750000000001px;">10/20/2016</div>
<div class="t c" style="left:556.5px;top:483.8750000000001px;letter-spacing:-0.5px">1.45 GB</div>
<svg class="ic" style="left:177.8px;top:163px;width:10.4px;height:10.4px" viewBox="0 0 10.4 10.4"><circle cx="5.2" cy="5.2" r="5.2" fill="#fff"/><circle cx="5.2" cy="5.2" r="4.3" fill="#196bcc"/><path d="M3.1 5.3 L4.6 6.7 L7.3 3.9" fill="none" stroke="#fff" stroke-width="1" stroke-linecap="round" stroke-linejoin="round"/></svg>
<svg class="ic" style="left:352.4px;top:167.8px;width:8px;height:2px" viewBox="0 0 8 2"><circle cx="0.8" cy="1" r="0.7" fill="#424242"/><circle cx="4" cy="1" r="0.7" fill="#424242"/><circle cx="7.2" cy="1" r="0.7" fill="#424242"/></svg>
<svg class="ic" style="left:370px;top:164.5px;width:9px;height:8.5px" viewBox="0 0 9 8.5"><path d="M4.2 1 H1.6 Q0.5 1 0.5 2.1 V6.6 Q0.5 7.6 1.6 7.6 H6.2 Q7.2 7.6 7.2 6.6 V5.6" fill="none" stroke="#616161" stroke-width="0.8"/><path d="M2.6 5.6 Q3 2.8 6 2.8 H7 V1 L9 3.3 L7 5.6 V3.9" fill="none" stroke="#616161" stroke-width="0.8" stroke-linejoin="round"/></svg>
<div class="a" style="left:596.9px;top:66.2px;width:3.6px;height:108.5px;border-radius:2px;background:#666"></div>
<div class="a" style="left:157.5px;top:499.3px;width:285.2px;height:3.6px;border-radius:2px;background:#666"></div>
</body></html>
